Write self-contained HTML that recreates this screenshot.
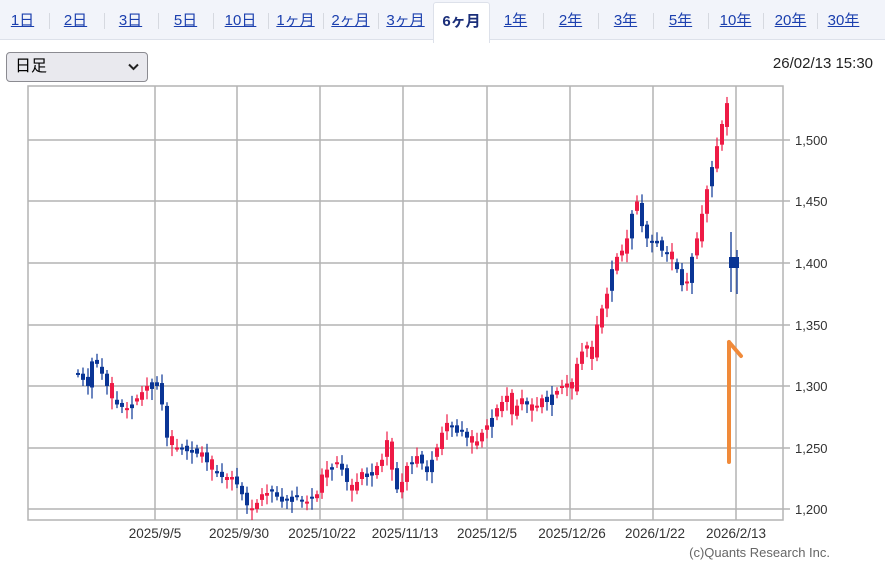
<!DOCTYPE html>
<html><head><meta charset="utf-8"><style>
body{margin:0;width:885px;height:570px;background:#fff;font-family:"Liberation Sans","Noto Sans CJK JP",sans-serif;overflow:hidden;position:relative}
.tabs{position:absolute;left:0;top:0;width:885px;height:39px;background:#f2f4fa;border-bottom:1px solid #dde1ea}
.tab{position:absolute;top:0;height:39px;line-height:42px;width:55px;text-align:center;font-size:15px;color:#1b3fae;text-decoration:underline}
.sep{position:absolute;top:13px;width:1px;height:16px;background:#d6d9e0}
.act{background:#fff;border:1px solid #dde1ea;border-bottom:none;height:40px;color:#1b2f7a;font-weight:bold;text-decoration:none;top:2px;line-height:38px;border-radius:3px 3px 0 0}
.sel{position:absolute;left:6px;top:52px;width:142px;height:30px;border:1px solid #8b8b91;border-radius:4px;background:#e9e9ee;box-sizing:border-box;font-size:16px;line-height:28px;padding-left:8px}
.date{position:absolute;right:12px;top:55px;font-size:15px;color:#222}
</style></head><body>
<div class="tabs">
<div class="tab" style="left:-5px">1日</div><div class="sep" style="left:49px"></div>
<div class="tab" style="left:48px">2日</div><div class="sep" style="left:104px"></div>
<div class="tab" style="left:103px">3日</div><div class="sep" style="left:158px"></div>
<div class="tab" style="left:158px">5日</div><div class="sep" style="left:213px"></div>
<div class="tab" style="left:213px">10日</div><div class="sep" style="left:268px"></div>
<div class="tab" style="left:268px">1ヶ月</div><div class="sep" style="left:323px"></div>
<div class="tab" style="left:323px">2ヶ月</div><div class="sep" style="left:378px"></div>
<div class="tab" style="left:378px">3ヶ月</div>
<div class="tab act" style="left:433px">6ヶ月</div>
<div class="tab" style="left:488px">1年</div><div class="sep" style="left:543px"></div>
<div class="tab" style="left:543px">2年</div><div class="sep" style="left:598px"></div>
<div class="tab" style="left:598px">3年</div><div class="sep" style="left:653px"></div>
<div class="tab" style="left:653px">5年</div><div class="sep" style="left:708px"></div>
<div class="tab" style="left:708px">10年</div><div class="sep" style="left:763px"></div>
<div class="tab" style="left:763px">20年</div><div class="sep" style="left:817px"></div>
<div class="tab" style="left:816px">30年</div>
</div>
<div class="sel">日足<svg style="position:absolute;right:8px;top:10px" width="11" height="8" viewBox="0 0 11 8"><path d="M1 1.5L5.5 6L10 1.5" stroke="#222" stroke-width="2" fill="none"/></svg></div>
<div class="date">26/02/13 15:30</div>
<svg id="c" style="position:absolute;left:0;top:0" width="885" height="570">
<g stroke="#b4b4b4" stroke-width="1.5" fill="none">
<rect x="28" y="86" width="755" height="434"/>
<path d="M28 140H783M28 201H783M28 263H783M28 325H783M28 386H783M28 448H783M28 509H783"/>
<path d="M155 86V520M237 86V520M320 86V520M403 86V520M487 86V520M570 86V520M653 86V520M736 86V520"/>
<path d="M783 140H790M783 201H790M783 263H790M783 325H790M783 386H790M783 448H790M783 509H790"/>
</g>
<g font-size="13" fill="#333" font-family="Liberation Sans,sans-serif">
<text x="795" y="145">1,500</text><text x="795" y="206">1,450</text><text x="795" y="268">1,400</text><text x="795" y="330">1,350</text><text x="795" y="391">1,300</text><text x="795" y="453">1,250</text><text x="795" y="514">1,200</text>
<g text-anchor="middle" font-size="13.5"><text x="155" y="538">2025/9/5</text><text x="239" y="538">2025/9/30</text><text x="322" y="538">2025/10/22</text><text x="405" y="538">2025/11/13</text><text x="487" y="538">2025/12/5</text><text x="572" y="538">2025/12/26</text><text x="655" y="538">2026/1/22</text><text x="736" y="538">2026/2/13</text></g>
<text x="830" y="557" text-anchor="end" fill="#666" font-size="13">(c)Quants Research Inc.</text>
</g>
<g id="k"></g>
<g stroke="#0a3595" stroke-width="1.3"><line x1="731" x2="731" y1="232" y2="292"/><line x1="737" x2="737" y1="250" y2="294"/></g>
<rect x="729" y="257" width="10" height="11" fill="#0a3595"/>
<path d="M729 462V342M729 342L741 356" stroke="#f08a3a" stroke-width="4" fill="none" stroke-linecap="round"/>
</svg>
<script>
(function(){
var d=[[76,1310],[81,1305],[86,1300],[90,1320],[95,1318],[100,1310],[105,1300],[110,1290],[115,1285],[120,1283],[125,1282],[130,1285],[135,1290],[140,1295],[145,1300],[150,1303],[155,1300],[160,1285],[165,1258],[170,1252],[175,1250],[180,1249],[185,1247],[190,1248],[195,1245],[200,1246],[205,1238],[210,1232],[215,1229],[220,1226],[225,1226],[230,1224],[235,1220],[240,1212],[245,1203],[250,1200],[255,1205],[260,1212],[265,1213],[270,1216],[275,1210],[280,1206],[285,1207],[290,1210],[295,1210],[300,1206],[305,1206],[310,1210],[315,1212],[320,1228],[325,1232],[330,1234],[335,1238],[340,1232],[345,1222],[350,1215],[355,1222],[360,1230],[365,1226],[370,1230],[375,1235],[380,1240],[385,1256],[390,1232],[395,1216],[400,1222],[405,1235],[410,1238],[415,1243],[420,1237],[425,1230],[430,1240],[435,1250],[440,1262],[445,1270],[450,1268],[455,1262],[460,1264],[465,1258],[470,1254],[475,1255],[480,1262],[485,1268],[490,1274],[495,1282],[500,1287],[505,1292],[510,1277],[515,1284],[520,1290],[525,1285],[530,1280],[535,1284],[540,1290],[545,1287],[550,1293],[555,1296],[560,1300],[565,1302],[570,1298],[575,1318],[580,1328],[585,1333],[590,1322],[595,1350],[600,1363],[605,1375],[610,1395],[615,1405],[620,1410],[625,1420],[630,1440],[635,1450],[640,1430],[645,1420],[650,1418],[655,1416],[660,1410],[665,1408],[670,1403],[675,1395],[680,1382],[685,1385],[690,1405],[695,1420],[700,1440],[705,1460],[710,1478],[715,1495],[720,1513],[725,1530]];
function y(p){return 263-(p-1400)*1.23}
var s='',prev=d[0][1]+3;
for(var i=0;i<d.length;i++){var x=d[i][0],c=d[i][1],o=prev+((i*7)%5-2)*1.2;var up=c>=o;if(i%4==3){up=!up;var t=o;o=c;c=t}
var col=up?'#ee1a45':'#0a3595';var hi=Math.max(o,c)+3+(i%3)*2,lo=Math.min(o,c)-3-(i%4)*2;
var ry=y(Math.max(o,c)),h=Math.max(2,Math.abs(y(o)-y(c)));
s+='<line x1="'+(x+2)+'" x2="'+(x+2)+'" y1="'+y(hi)+'" y2="'+y(lo)+'" stroke="'+col+'" stroke-width="1.2"/><rect x="'+x+'" y="'+ry+'" width="4" height="'+h+'" fill="'+col+'"/>';prev=d[i][1];}
document.getElementById('k').innerHTML=s;
})();
</script>
</body></html>
